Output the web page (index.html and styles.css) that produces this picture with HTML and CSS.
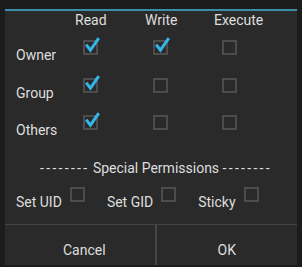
FILE: index.html
```html
<!DOCTYPE html>
<html lang="en">
<head>
    <meta charset="UTF-8">
    <title>Permissions</title>
    <link rel="stylesheet" href="styles.css">
</head>
<body>

    <div class="dialog">
        <div class="perm-grid">
            <span></span>
            <span class="col-head">Read</span>
            <span class="col-head">Write</span>
            <span class="col-head">Execute</span>

            <span class="row-label">Owner</span>
            <span class="cell"><svg class="box" viewBox="0 0 18 20"><rect x="1" y="6" width="13" height="13"/><path class="tick" d="M3.2 9.6 L7.4 15.2 L15.8 3.2"/></svg></span>
            <span class="cell"><svg class="box" viewBox="0 0 18 20"><rect x="1" y="6" width="13" height="13"/><path class="tick" d="M3.2 9.6 L7.4 15.2 L15.8 3.2"/></svg></span>
            <span class="cell"><svg class="box" viewBox="0 0 18 20"><rect x="1" y="6" width="13" height="13"/></svg></span>

            <span class="row-label">Group</span>
            <span class="cell"><svg class="box" viewBox="0 0 18 20"><rect x="1" y="6" width="13" height="13"/><path class="tick" d="M3.2 9.6 L7.4 15.2 L15.8 3.2"/></svg></span>
            <span class="cell"><svg class="box" viewBox="0 0 18 20"><rect x="1" y="6" width="13" height="13"/></svg></span>
            <span class="cell"><svg class="box" viewBox="0 0 18 20"><rect x="1" y="6" width="13" height="13"/></svg></span>

            <span class="row-label">Others</span>
            <span class="cell"><svg class="box" viewBox="0 0 18 20"><rect x="1" y="6" width="13" height="13"/><path class="tick" d="M3.2 9.6 L7.4 15.2 L15.8 3.2"/></svg></span>
            <span class="cell"><svg class="box" viewBox="0 0 18 20"><rect x="1" y="6" width="13" height="13"/></svg></span>
            <span class="cell"><svg class="box" viewBox="0 0 18 20"><rect x="1" y="6" width="13" height="13"/></svg></span>
        </div>

        <div class="special-title"><span class="dashes">--------</span> Special Permissions <span class="dashes">--------</span></div>

        <div class="special-row">
            <span class="special-item"><span class="special-label">Set UID</span><svg class="box" viewBox="0 1 18 20"><rect x="1" y="6" width="13" height="13"/></svg></span>
            <span class="special-item"><span class="special-label">Set GID</span><svg class="box" viewBox="0 1 18 20"><rect x="1" y="6" width="13" height="13"/></svg></span>
            <span class="special-item"><span class="special-label">Sticky</span><svg class="box" viewBox="0 1 18 20"><rect x="1" y="6" width="13" height="13"/></svg></span>
        </div>

        <div class="actions">
            <button class="action cancel">Cancel</button>
            <button class="action">OK</button>
        </div>
    </div>

</body>
</html>
```

FILE: styles.css
```css
:root {
    --holo-blue: #33b5e5;
    --line-blue: #3a8ea8;
    --dialog-bg: #2a2a2a;
    --text-color: #dedede;
    --box-border: #565656;
    --divider: #454545;
}
body {
    margin: 0;
    height: 267px;
    overflow: hidden;
    background-color: #1c1c1c;
    font-family: Roboto, 'Liberation Sans', sans-serif;
    font-size: 14px;
    color: var(--text-color);
}
.dialog {
    margin: 9px 5px 0 5px;
    height: 254px;
    border-top: 2px solid var(--line-blue);
    background-color: var(--dialog-bg);
    display: flex;
    flex-direction: column;
}
.perm-grid {
    display: grid;
    grid-template-columns: 70px 70px 69px 1fr;
    grid-template-rows: 22px 37.5px 37.5px 37.5px;
}
.col-head {
    line-height: 20px;
    margin-top: -1px;
}
.row-label {
    padding-left: 11px;
    padding-top: 12px;
    line-height: 20px;
}
.cell {
    padding-top: 2px;
    padding-left: 7.5px;
}
.box {
    display: block;
    width: 18px;
    height: 20px;
    overflow: visible;
}
.box rect {
    fill: none;
    stroke: var(--box-border);
    stroke-width: 1.6;
}
.box .tick {
    fill: none;
    stroke: var(--holo-blue);
    stroke-width: 3;
}
.special-title {
    margin-top: 12px;
    line-height: 20px;
    text-align: center;
    padding-left: 10px;
}
.dashes {
    letter-spacing: 2.3px;
}
.special-row {
    display: flex;
    gap: 19px;
    padding-left: 11px;
    margin-top: 5px;
    height: 29px;
}
.special-item {
    display: flex;
    align-items: flex-start;
    gap: 8px;
}
.special-label {
    line-height: 20px;
    margin-top: 9px;
}
.actions {
    margin-top: auto;
    display: flex;
    height: 40px;
    border-top: 1px solid var(--divider);
}
.action {
    flex: 1;
    border: none;
    background: transparent;
    color: var(--text-color);
    font-family: inherit;
    font-size: 14px;
    line-height: 20px;
    padding: 15px 0 5px 0;
}
.action.cancel {
    padding-left: 9px;
    border-right: 2px solid var(--divider);
}
```
